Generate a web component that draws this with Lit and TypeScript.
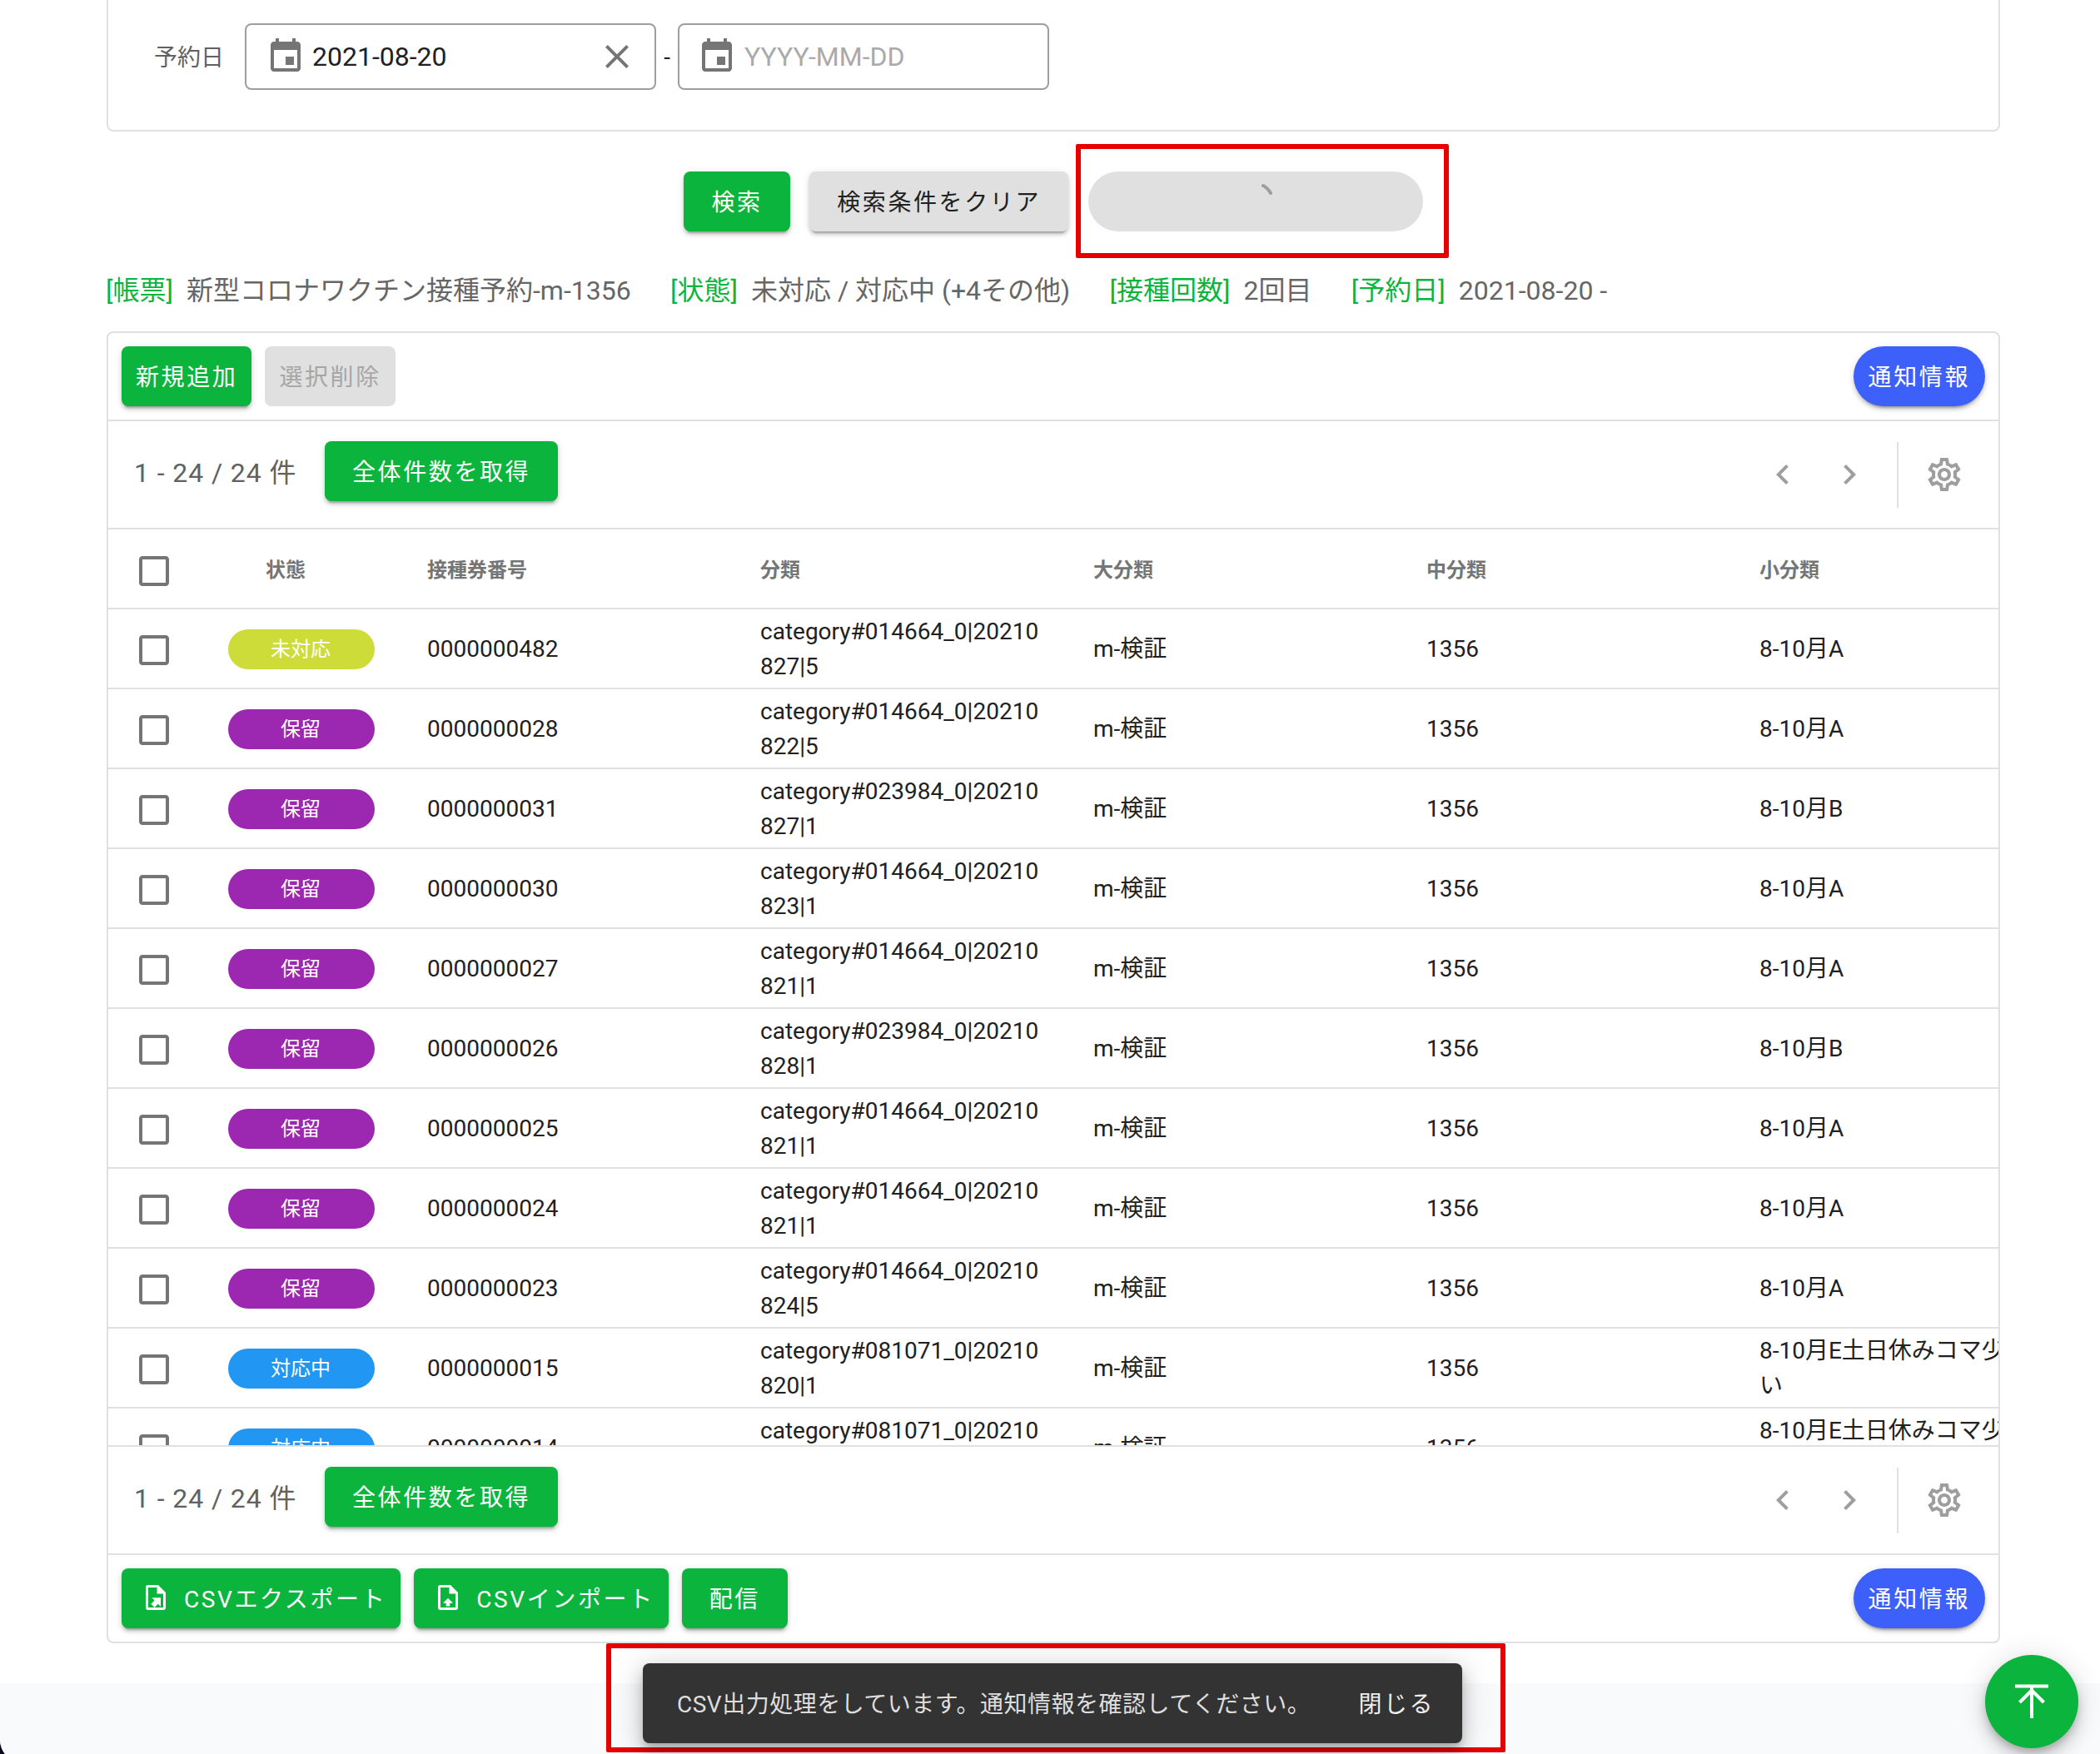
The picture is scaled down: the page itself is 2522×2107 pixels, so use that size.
import { LitElement, html, css, svg } from 'lit';
import { customElement } from 'lit/decorators.js';

const ICONS = {
  event: 'M17 12h-5v5h5v-5zM16 1v2H8V1H6v2H5c-1.11 0-1.99.9-1.99 2L3 19c0 1.1.89 2 2 2h14c1.1 0 2-.9 2-2V5c0-1.1-.9-2-2-2h-1V1h-2zm3 18H5V8h14v11z',
  close: 'M19 6.41L17.59 5 12 10.59 6.41 5 5 6.41 10.59 12 5 17.59 6.41 19 12 13.41 17.59 19 19 17.59 13.41 12z',
  left: 'M15.41 7.41L14 6l-6 6 6 6 1.41-1.41L10.83 12z',
  right: 'M10 6L8.59 7.41 13.17 12l-4.58 4.59L10 18l6-6z',
  box: 'M19 5v14H5V5h14m0-2H5c-1.1 0-2 .9-2 2v14c0 1.1.9 2 2 2h14c1.1 0 2-.9 2-2V5c0-1.1-.9-2-2-2z',
  gear: 'M19.43 12.98c.04-.32.07-.64.07-.98 0-.34-.03-.66-.07-.98l2.11-1.65c.19-.15.24-.42.12-.64l-2-3.46c-.09-.16-.26-.25-.44-.25-.06 0-.12.01-.17.03l-2.49 1c-.52-.4-1.08-.73-1.69-.98l-.38-2.65C14.46 2.18 14.25 2 14 2h-4c-.25 0-.46.18-.49.42l-.38 2.65c-.61.25-1.17.59-1.69.98l-2.49-1c-.06-.02-.12-.03-.18-.03-.17 0-.34.09-.43.25l-2 3.46c-.13.22-.07.49.12.64l2.11 1.65c-.04.32-.07.65-.07.98 0 .33.03.66.07.98l-2.11 1.65c-.19.15-.24.42-.12.64l2 3.46c.09.16.26.25.44.25.06 0 .12-.01.17-.03l2.49-1c.52.4 1.08.73 1.69.98l.38 2.65c.03.24.24.42.49.42h4c.25 0 .46-.18.49-.42l.38-2.65c.61-.25 1.17-.59 1.69-.98l2.49 1c.06.02.12.03.18.03.17 0 .34-.09.43-.25l2-3.46c.12-.22.07-.49-.12-.64l-2.11-1.65zm-1.98-1.71c.04.31.05.52.05.73 0 .21-.02.43-.05.73l-.14 1.13.89.7 1.08.84-.7 1.21-1.27-.51-1.04-.42-.9.68c-.43.32-.84.56-1.25.73l-1.06.43-.16 1.13-.2 1.35h-1.4l-.19-1.35-.16-1.13-1.06-.43c-.43-.18-.83-.41-1.23-.71l-.91-.7-1.06.43-1.27.51-.7-1.21 1.08-.84.89-.7-.14-1.13c-.03-.31-.05-.54-.05-.74s.02-.43.05-.73l.14-1.13-.89-.7-1.08-.84.7-1.21 1.27.51 1.04.42.9-.68c.43-.32.84-.56 1.25-.73l1.06-.43.16-1.13.2-1.35h1.39l.19 1.35.16 1.13 1.06.43c.43.18.83.41 1.23.71l.91.7 1.06-.43 1.27-.51.7 1.21-1.07.85-.89.7.14 1.13zM12 8c-2.21 0-4 1.79-4 4s1.79 4 4 4 4-1.79 4-4-1.79-4-4-4zm0 6c-1.1 0-2-.9-2-2s.9-2 2-2 2 .9 2 2-.9 2-2 2z',
  fileExport: 'M14 2H6a2 2 0 0 0-2 2v16a2 2 0 0 0 2 2h12a2 2 0 0 0 2-2V8l-6-6zm4 18H6V4h7v5h5v11zM8.93 12.22H16v7.07l-2.12-2.12L11.05 20l-2.83-2.83 2.83-2.82z',
  fileImport: 'M14 2H6a2 2 0 0 0-2 2v16a2 2 0 0 0 2 2h12a2 2 0 0 0 2-2V8l-6-6zm4 18H6V4h7v5h5v11zM12 12.5l4 4h-2.5V19h-3v-2.5H8z',
};

const icon = (name: keyof typeof ICONS, cls = '') => html`
  <svg class="icon ${cls}" viewBox="0 0 24 24">${svg`<path d=${ICONS[name]}></path>`}</svg>
`;

const STATUS: Record<string, string> = { 未対応: 'lime', 保留: 'purple', 対応中: 'blue' };

// status, number, category, sub category
const ROWS = [
  ['未対応', '0000000482', '014664_0|20210827|5', '8-10月A'],
  ['保留', '0000000028', '014664_0|20210822|5', '8-10月A'],
  ['保留', '0000000031', '023984_0|20210827|1', '8-10月B'],
  ['保留', '0000000030', '014664_0|20210823|1', '8-10月A'],
  ['保留', '0000000027', '014664_0|20210821|1', '8-10月A'],
  ['保留', '0000000026', '023984_0|20210828|1', '8-10月B'],
  ['保留', '0000000025', '014664_0|20210821|1', '8-10月A'],
  ['保留', '0000000024', '014664_0|20210821|1', '8-10月A'],
  ['保留', '0000000023', '014664_0|20210824|5', '8-10月A'],
  ['対応中', '0000000015', '081071_0|20210820|1', '8-10月E土日休みコマ少ない'],
  ['対応中', '0000000014', '081071_0|20210820|1', '8-10月E土日休みコマ少ない'],
];

@customElement('app-root')
export class AppRoot extends LitElement {
  static styles = css`
    :host {
      display: block;
      height: 2107px;
      overflow: hidden;
      background: #0a0a1e;
      font-family: Roboto, 'Noto Sans CJK JP', sans-serif;
      color: #212121;
    }
    * {
      box-sizing: border-box;
    }
    .page {
      position: relative;
      height: 2117px;
      background: #fff;
      border-bottom-left-radius: 27px;
      overflow: hidden;
    }
    .main {
      height: 2022px;
      padding: 0 120px 0 128px;
    }
    .footer {
      height: 95px;
      background: #f9fafb;
    }
    .icon {
      display: block;
      flex: none;
      width: 48px;
      height: 48px;
      fill: #757575;
    }
    .icon.nav {
      fill: #9e9e9e;
    }

    /* search form */
    .search-card {
      height: 158px;
      padding: 28px 0 0 55px;
      border: 2px solid #e0e0e0;
      border-top: none;
      border-radius: 0 0 8px 8px;
      display: flex;
      align-items: flex-start;
    }
    .form-label {
      width: 109px;
      height: 78px;
      display: flex;
      align-items: center;
      font-size: 28px;
      color: #616161;
    }
    .field {
      height: 80px;
      border: 2px solid #9e9e9e;
      border-radius: 8px;
      display: flex;
      align-items: center;
      font-size: 32px;
    }
    .field.from {
      width: 494px;
      padding: 0 21px 0 23px;
      gap: 8px;
    }
    .field.to {
      width: 446px;
      padding: 0 21px;
      gap: 9px;
    }
    .field .value {
      flex: 1;
    }
    .field .placeholder {
      flex: 1;
      color: #aaa;
    }
    .dash {
      width: 26px;
      height: 80px;
      display: flex;
      align-items: center;
      justify-content: center;
      font-size: 28px;
    }

    /* buttons */
    .btn {
      height: 72px;
      padding: 0 33px 2px;
      border: none;
      border-radius: 8px;
      display: inline-flex;
      align-items: center;
      flex: none;
      font: inherit;
      font-size: 28px;
      letter-spacing: 2.6px;
      white-space: nowrap;
      box-shadow: 0 6px 2px -4px rgba(0, 0, 0, 0.2), 0 4px 4px 0 rgba(0, 0, 0, 0.14), 0 2px 10px 0 rgba(0, 0, 0, 0.12);
    }
    .btn.green {
      background: #0bb53d;
      color: #fff;
    }
    .btn.grey {
      background: #e0e0e0;
      color: #212121;
    }
    .btn.disabled {
      background: #e0e0e0;
      color: #a6a6a6;
      box-shadow: none;
    }
    .btn.compact {
      padding: 0 17px 2px;
    }
    .btn.notice {
      padding: 0 18px 2px;
      border-radius: 36px;
      background: #3d5ffa;
      color: #fff;
    }
    .btn.with-icon {
      padding: 0 17px 2px 23px;
      gap: 16px;
    }
    .btn.with-icon .icon {
      width: 36px;
      height: 36px;
      fill: #fff;
    }
    .search-actions {
      margin-top: 48px;
      display: flex;
      justify-content: center;
      gap: 23.5px;
    }
    .pending {
      position: relative;
      width: 402px;
      height: 72px;
      border-radius: 36px;
      background: #e0e0e0;
      display: flex;
      align-items: center;
      justify-content: center;
    }
    .pending svg {
      width: 48px;
      height: 48px;
      fill: none;
      stroke: #9e9e9e;
      stroke-width: 4;
      stroke-linecap: round;
    }
    .pending-frame {
      position: absolute;
      top: -33px;
      left: -15px;
      right: -31px;
      bottom: -32px;
      border: 6px solid #e60000;
      border-radius: 2px;
    }

    /* applied conditions */
    .summary {
      margin: 47px 0 25px -1px;
      height: 48px;
      display: flex;
      align-items: center;
      gap: 47.3px;
      font-size: 32px;
      line-height: 48px;
      color: #666;
      white-space: nowrap;
    }
    .summary b {
      margin-right: 16px;
      font-weight: 400;
      color: #0bb53d;
    }

    /* result card */
    .result-card {
      border: 2px solid #e0e0e0;
      border-radius: 8px;
      overflow: hidden;
    }
    .toolbar {
      height: 104px;
      padding: 16px;
      display: flex;
      align-items: center;
      gap: 16px;
    }
    .toolbar .notice {
      margin-left: auto;
    }
    .toolbar.top {
      height: 106px;
      border-bottom: 2px solid #e0e0e0;
    }
    .pager {
      height: 130px;
      padding-left: 31px;
      border-bottom: 2px solid #e0e0e0;
      display: flex;
      align-items: center;
    }
    .pager.bottom {
      border-top: 2px solid #e0e0e0;
      height: 132px;
    }
    .pager .count {
      width: 229px;
      margin-bottom: 10px;
      font-size: 32px;
      letter-spacing: 0.9px;
      color: #616161;
    }
    .pager .btn {
      margin-bottom: 8px;
    }
    .pager .nav-group {
      margin-left: auto;
      padding-right: 41px;
      display: flex;
      align-items: center;
    }
    .pager .next {
      margin-left: 32px;
    }
    .pager .sep {
      width: 2px;
      height: 79px;
      margin: 0 31px 0 33px;
      background: #e0e0e0;
    }

    /* table */
    .viewport {
      height: 1100px;
      overflow: hidden;
    }
    .row {
      width: 2350px;
      height: 96px;
      padding-top: 1px;
      border-bottom: 2px solid #e0e0e0;
      display: grid;
      grid-template-columns: 112px 239px repeat(5, 400px);
      align-items: center;
      font-size: 28px;
      line-height: 42px;
    }
    .row > div {
      padding: 0 32px;
      word-break: break-all;
    }
    .row > .check {
      padding: 2px 0 0 31px;
    }
    .row > .state {
      padding: 0 31px 0 32px;
    }
    .row.head {
      padding-top: 3px;
      font-size: 24px;
      font-weight: 700;
      color: #757575;
    }
    .head .state {
      text-align: center;
      padding-right: 69px;
    }
    .chip {
      height: 48px;
      padding-right: 2px;
      border-radius: 24px;
      display: flex;
      align-items: center;
      justify-content: center;
      font-size: 24px;
      color: #fff;
    }
    .chip.lime {
      background: #cddc39;
    }
    .chip.purple {
      background: #9c27b0;
    }
    .chip.blue {
      background: #2196f3;
    }

    /* floating */
    .snack-frame {
      position: absolute;
      left: 728px;
      top: 1974px;
      width: 1080px;
      height: 131px;
      padding: 18px 46px 5px 38px;
      border: 6px solid #e60000;
      border-radius: 2px;
    }
    .snackbar {
      height: 96px;
      padding: 0 33px 2px 41px;
      border-radius: 8px;
      background: #333;
      display: flex;
      align-items: center;
      justify-content: space-between;
      font-size: 28px;
      letter-spacing: 0.5px;
      color: #dedede;
      box-shadow: 0 6px 10px -2px rgba(0, 0, 0, 0.2), 0 12px 20px 2px rgba(0, 0, 0, 0.14), 0 2px 36px 4px rgba(0, 0, 0, 0.12);
    }
    .snackbar .action {
      letter-spacing: 2.5px;
      color: #eee;
    }
    .to-top {
      position: absolute;
      left: 2384px;
      top: 1988px;
      width: 112px;
      height: 112px;
      border-radius: 50%;
      background: #0bb53d;
      display: flex;
      align-items: center;
      justify-content: center;
      box-shadow: 0 6px 10px -2px rgba(0, 0, 0, 0.2), 0 12px 20px 0 rgba(0, 0, 0, 0.14), 0 2px 36px 0 rgba(0, 0, 0, 0.12);
    }
    .to-top svg {
      width: 48px;
      height: 48px;
      fill: none;
      stroke: #fff;
      stroke-width: 4;
    }
  `;

  private renderPager(bottom = false) {
    return html`
      <div class="pager ${bottom ? 'bottom' : ''}">
        <span class="count">1 - 24 / 24 件</span>
        <button class="btn green">全体件数を取得</button>
        <div class="nav-group">
          ${icon('left', 'nav')}
          <span class="next">${icon('right', 'nav')}</span>
          <span class="sep"></span>
          ${icon('gear', 'nav')}
        </div>
      </div>
    `;
  }

  private renderRow(r: string[]) {
    return html`
      <div class="row">
        <div class="check">${icon('box')}</div>
        <div class="state"><span class="chip ${STATUS[r[0]]}">${r[0]}</span></div>
        <div>${r[1]}</div>
        <div>category#${r[2]}</div>
        <div>m-検証</div>
        <div>1356</div>
        <div>${r[3]}</div>
      </div>
    `;
  }

  render() {
    return html`
      <div class="page">
        <div class="main">
          <div class="search-card">
            <span class="form-label">予約日</span>
            <div class="field from">
              ${icon('event')}
              <span class="value">2021-08-20</span>
              ${icon('close')}
            </div>
            <span class="dash">-</span>
            <div class="field to">
              ${icon('event')}
              <span class="placeholder">YYYY-MM-DD</span>
            </div>
          </div>

          <div class="search-actions">
            <button class="btn green">検索</button>
            <button class="btn grey">検索条件をクリア</button>
            <div class="pending">
              <svg viewBox="0 0 48 48"><path d="M33 5A21 21 0 0 1 42 14"></path></svg>
              <div class="pending-frame"></div>
            </div>
          </div>

          <div class="summary">
            <span><b>[帳票]</b>新型コロナワクチン接種予約-m-1356</span>
            <span><b>[状態]</b>未対応 / 対応中 (+4その他)</span>
            <span><b>[接種回数]</b>2回目</span>
            <span><b>[予約日]</b>2021-08-20 -</span>
          </div>

          <div class="result-card">
            <div class="toolbar top">
              <button class="btn green compact">新規追加</button>
              <button class="btn disabled compact">選択削除</button>
              <button class="btn notice">通知情報</button>
            </div>
            ${this.renderPager()}
            <div class="viewport">
              <div class="row head">
                <div class="check">${icon('box')}</div>
                <div class="state">状態</div>
                <div>接種券番号</div>
                <div>分類</div>
                <div>大分類</div>
                <div>中分類</div>
                <div>小分類</div>
              </div>
              ${ROWS.map((r) => this.renderRow(r))}
            </div>
            ${this.renderPager(true)}
            <div class="toolbar">
              <button class="btn green with-icon">${icon('fileExport')}CSVエクスポート</button>
              <button class="btn green with-icon">${icon('fileImport')}CSVインポート</button>
              <button class="btn green">配信</button>
              <button class="btn notice">通知情報</button>
            </div>
          </div>
        </div>
        <div class="footer"></div>

        <div class="snack-frame">
          <div class="snackbar">
            <span>CSV出力処理をしています。通知情報を確認してください。</span>
            <span class="action">閉じる</span>
          </div>
        </div>
        <div class="to-top">
          <svg viewBox="0 0 48 48">
            <path d="M4 5.500H44M24 6V44M9.500 25L24 10.500L38.500 25"></path>
          </svg>
        </div>
      </div>
    `;
  }
}
